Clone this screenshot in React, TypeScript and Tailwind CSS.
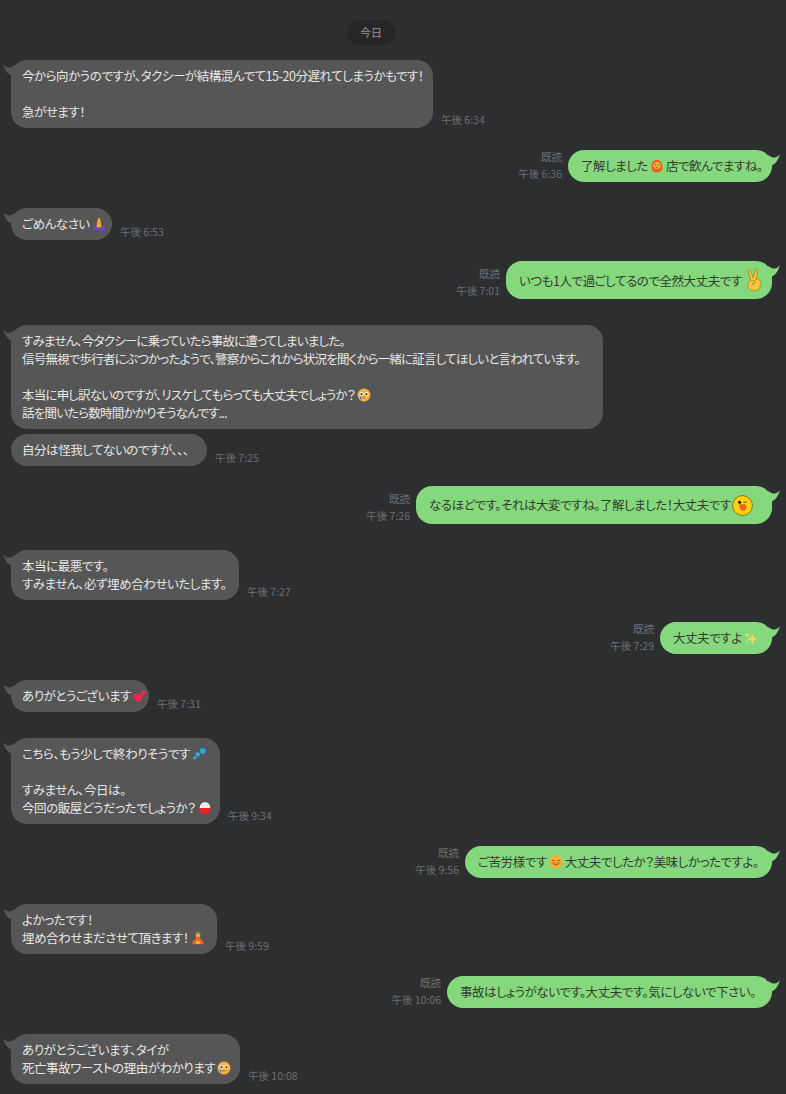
import React from 'react';

const Emoji = ({ children }: { children: React.ReactNode }) => (
  <svg viewBox="0 0 16 16" className="inline-block w-[14px] h-[14px] align-[-2px] mx-[2px]">
    {children}
  </svg>
);

const Lion = () => (
  <Emoji>
    <path d="M8 1 C12 1 14 4 14 7 C14 10 15 12 13 13 L11 15 L5 15 L3 13 C1 12 2 10 2 7 C2 4 4 1 8 1Z" fill="#f4581c" />
    <circle cx="8" cy="7.5" r="4.2" fill="#f7b23b" />
    <rect x="6" y="6" width="1" height="1.4" fill="#5a3a10" />
    <rect x="9" y="6" width="1" height="1.4" fill="#5a3a10" />
    <path d="M6.5 9.5 h3 l-1.5 1.5z" fill="#c2410c" />
  </Emoji>
);

const Pray = () => (
  <Emoji>
    <path d="M6.8 1.5 h2.4 L10.5 9 L11 12 H5 L5.5 9Z" fill="#f9b233" />
    <path d="M8 2 V11" stroke="#c07d12" strokeWidth="0.6" />
    <path d="M4.5 10.5 L1 13.5 V15 H7 V12.5Z" fill="#7c3aed" />
    <path d="M11.5 10.5 L15 13.5 V15 H9 V12.5Z" fill="#7c3aed" />
  </Emoji>
);

const Victory = () => (
  <svg viewBox="0 0 22 26" className="inline-block w-[20px] h-[24px] align-[-6px] ml-[3px]">
    <path
      d="M6 13 L3.4 3.2 C3 1.6 5.4 0.9 5.9 2.5 L9 10.6 L11.6 1.7 C12.1 0.2 14.4 0.8 14.1 2.4 L12.4 11.6 C14.6 11.4 16 12.2 16 13.6 C17.4 13.8 17.6 15.2 17 16 C17.8 16.6 17.6 18.2 16.6 18.8 C17 22.4 14.4 25 10.4 25 C6.2 25 3.4 22.6 3.2 19 C3 16.4 4 14.4 6 13Z"
      fill="#f8c73e"
      stroke="#a97f1c"
      strokeWidth="0.9"
    />
    <path d="M6 13.6 C8 13 10.4 13.4 11 15 C11.4 16.6 9 17 7.6 16.4 M9.4 17 C8.6 18.4 7.6 19 6.8 19.4 M12.4 11.6 L11.6 14" fill="none" stroke="#a97f1c" strokeWidth="0.9" />
  </svg>
);

const Crying = () => (
  <Emoji>
    <circle cx="8" cy="8" r="7.4" fill="#fbb040" />
    <circle cx="5.2" cy="6.8" r="2.3" fill="#fff" />
    <circle cx="10.8" cy="6.8" r="2.3" fill="#fff" />
    <circle cx="5.2" cy="7" r="1.2" fill="#4a3410" />
    <circle cx="10.8" cy="7" r="1.2" fill="#4a3410" />
    <path d="M6.5 11.6 q1.5 -1.2 3 0" stroke="#7a4a10" strokeWidth="0.8" fill="none" />
    <path d="M4.2 9 C3 11 3 13 4.2 13 C5.4 13 5.4 11 4.2 9Z" fill="#2f7de1" />
  </Emoji>
);

const Sally = () => (
  <svg viewBox="0 0 22 22" className="inline-block w-[21px] h-[21px] align-[-6px] ml-[1px]">
    <circle cx="11" cy="11" r="10.4" fill="#ffd20a" stroke="#6b5a10" strokeWidth="0.8" />
    <circle cx="8" cy="7.6" r="1.6" fill="#111" />
    <path d="M12 7.6 h3.4" stroke="#5a4a10" strokeWidth="1" />
    <path d="M7.6 10 C10 9.4 13.6 9.6 14.6 10.4 C15.4 12 15 15.6 13 16.4 C11 17 8.6 16.2 8.2 14 Z" fill="#e8622a" />
  </svg>
);

const Sparkles = () => (
  <Emoji>
    <path d="M9.5 3 L11 7.5 L15.5 9 L11 10.5 L9.5 15 L8 10.5 L3.5 9 L8 7.5Z" fill="#fcd46a" />
    <path d="M3.5 1.5 L4.3 3.7 L6.5 4.5 L4.3 5.3 L3.5 7.5 L2.7 5.3 L0.5 4.5 L2.7 3.7Z" fill="#fcd46a" />
    <path d="M4 10.5 L4.6 12 L6 12.5 L4.6 13 L4 14.5 L3.4 13 L2 12.5 L3.4 12Z" fill="#fcd46a" />
  </Emoji>
);

const Hearts = () => (
  <Emoji>
    <path d="M1 8 C1 5 4.6 4 6.5 6.6 C8.6 5.2 11.6 6.4 11 9.4 C10.4 12 7.6 14 5.6 15 C3.4 13.6 1 11 1 8Z" fill="#f5274f" />
    <path d="M9 3.4 C9 1.6 11.4 1 12.4 2.6 C13.6 1.4 15.6 2.4 15.2 4.2 C14.8 5.8 13 7 11.8 7.6 C10.4 6.6 9 5.2 9 3.4Z" fill="#f5274f" />
  </Emoji>
);

const Sweat = () => (
  <Emoji>
    <path d="M10 1.5 C14.5 1 16 1.5 15.5 5 C15 8.4 10.4 8.8 9.4 6 C9 4.6 9.2 3 10 1.5Z" fill="#2aa8e0" />
    <path d="M5 6 C8.4 6 9.4 6.4 9 9 C8.6 11.6 5 11.6 4.2 9.8 C3.8 8.4 4.2 7 5 6Z" fill="#2aa8e0" />
    <path d="M2.4 10.6 C4.6 10.4 5.4 11 5 12.8 C4.6 14.8 1.8 14.8 1.2 13.4 C0.9 12.4 1.4 11.4 2.4 10.6Z" fill="#2aa8e0" />
  </Emoji>
);

const Rice = () => (
  <Emoji>
    <path d="M2 8 C2 3.5 5 1.5 8 1.5 C11 1.5 14 3.5 14 8Z" fill="#eeeeee" />
    <path d="M5 4 h1 M8 3 h1 M10 5 h1 M4 6 h1 M7 6 h1" stroke="#b9b9b9" strokeWidth="0.7" />
    <path d="M1.5 8 H14.5 C14.5 12.5 12 15 8 15 C4 15 1.5 12.5 1.5 8Z" fill="#ec2227" />
  </Emoji>
);

const Smile = () => (
  <Emoji>
    <circle cx="8" cy="8" r="7.4" fill="#ffac33" />
    <path d="M3.2 6.8 q1.8 -1.8 3.4 0 M9.4 6.8 q1.8 -1.8 3.4 0" stroke="#6b3d0a" strokeWidth="0.9" fill="none" />
    <path d="M2.8 9 H13.2" stroke="#f4511e" strokeWidth="0.8" />
    <path d="M4.6 9.8 q3.4 3.4 6.8 0" stroke="#6b3d0a" strokeWidth="0.9" fill="none" />
  </Emoji>
);

const Bow = () => (
  <Emoji>
    <path d="M5 2 q3 -1.6 6 0" stroke="#8fa3b8" strokeWidth="0.8" fill="none" />
    <circle cx="8" cy="5.4" r="2.8" fill="#f9a826" />
    <path d="M8 6 L13 11 L15 15 H1 L3 11Z" fill="#f4661b" />
    <path d="M5.6 11.6 h4.8 v3 h-4.8z" fill="#fbb040" />
  </Emoji>
);

const TailLeft = () => (
  <svg viewBox="0 0 14 12" className="absolute left-[-8px] top-[4px] w-[14px] h-[12px]">
    <path d="M0 0 C1.5 2 3.5 3.6 5.5 3.6 C8 3.6 10 2.5 12 1 L14 12 H9 C4 10 1.5 5 0 0Z" fill="#565656" />
  </svg>
);

const TailRight = () => (
  <svg viewBox="0 0 14 12" className="absolute right-[-8px] top-[4px] w-[14px] h-[12px]">
    <path d="M14 0 C12.5 2 10.5 3.6 8.5 3.6 C6 3.6 4 2.5 2 1 L0 12 H5 C10 10 12.5 5 14 0Z" fill="#85d97c" />
  </svg>
);

const Left = ({ time, className, width, tail = true, children }: { time?: string; className?: string; width: string; tail?: boolean; children: React.ReactNode }) => (
  <div className={`flex items-end ${className ?? ''}`}>
    <div className={`relative rounded-[16px] bg-[#565656] px-[11px] py-[7px] text-[12.5px] leading-[18px] text-[#e6e6e6] whitespace-pre ${width}`}>
      {tail && <TailLeft />}
      {children}
    </div>
    {time && <span className="ml-2 text-[10.5px] leading-[16px] text-[#6c6e72]">{time}</span>}
  </div>
);

const Right = ({ time, className, width, children }: { time: string; className?: string; width: string; children: React.ReactNode }) => (
  <div className={`flex items-end justify-end ${className ?? ''}`}>
    <div className="mr-[6px] flex flex-col items-end text-[10.5px] leading-[17px] text-[#6c6e72]">
      <span>既読</span>
      <span>{time}</span>
    </div>
    <div className={`relative flex items-center rounded-[16px] bg-[#85d97c] px-[13px] py-[7px] text-[12.5px] leading-[18px] text-[#333b33] whitespace-nowrap ${width}`}>
      <TailRight />
      <span>{children}</span>
    </div>
  </div>
);

export default function App() {
  return (
    <div className="h-[1094px] overflow-hidden bg-[#2d2e30] pl-[11px] pr-[14px] pt-[20px] font-['Noto_Sans_CJK_JP','Liberation_Sans',sans-serif] [font-feature-settings:'palt']">
      <div className="flex justify-center pr-[41px]">
        <div className="flex h-[25px] w-[48px] items-center justify-center rounded-full bg-[#252628] text-[11px] text-[#969696]">今日</div>
      </div>

      <Left time="午後 6:34" width="w-[422px] tracking-[-0.45px]" className="mt-[15px]">
        {'今から向かうのですが、タクシーが結構混んでて15-20分遅れてしまうかもです！\n\n急がせます！'}
      </Left>
      <Right time="午後 6:36" width="w-[204px] tracking-[-0.45px]" className="mt-[20px]">
        了解しました<Lion />店で飲んでますね。
      </Right>
      <Left time="午後 6:53" width="w-[101px] tracking-[-0.45px]" className="mt-[26px]">
        ごめんなさい<Pray />
      </Left>
      <Right time="午後 7:01" width="w-[266px] h-[38px] tracking-[-0.45px]" className="mt-[21px]">
        いつも1人で過ごしてるので全然大丈夫です<Victory />
      </Right>
      <Left width="w-[592px] tracking-[-0.8px]" className="mt-[26px]">
        {'すみません、今タクシーに乗っていたら事故に遭ってしまいました。\n信号無視で歩行者にぶつかったようで、警察からこれから状況を聞くから一緒に証言してほしいと言われています。\n\n本当に申し訳ないのですが、リスケしてもらっても大丈夫でしょうか？'}<Crying />
        {'\n話を聞いたら数時間かかりそうなんです...'}
      </Left>
      <Left time="午後 7:25" width="w-[196px] tracking-[-0.45px]" tail={false} className="mt-[5px]">
        自分は怪我してないのですが、、、
      </Left>
      <Right time="午後 7:26" width="w-[356px] h-[38px] tracking-[-0.45px]" className="mt-[20px]">
        なるほどです。それは大変ですね。了解しました！大丈夫です<Sally />
      </Right>
      <Left time="午後 7:27" width="w-[228px] tracking-[-0.45px]" className="mt-[26px]">
        {'本当に最悪です。\nすみません、必ず埋め合わせいたします。'}
      </Left>
      <Right time="午後 7:29" width="w-[112px] tracking-[-0.45px]" className="mt-[20px]">
        大丈夫ですよ<Sparkles />
      </Right>
      <Left time="午後 7:31" width="w-[138px] tracking-[-0.45px]" className="mt-[26px]">
        ありがとうございます<Hearts />
      </Left>
      <Left time="午後 9:34" width="w-[209px] tracking-[-0.45px]" className="mt-[26px]">
        こちら、もう少しで終わりそうです<Sweat />
        {'\n\nすみません、今日は。\n今回の飯屋どうだったでしょうか？'}<Rice />
      </Left>
      <Right time="午後 9:56" width="w-[307px] tracking-[-0.45px]" className="mt-[20px]">
        ご苦労様です<Smile />大丈夫でしたか？美味しかったですよ。
      </Right>
      <Left time="午後 9:59" width="w-[206px] tracking-[-0.45px]" className="mt-[26px]">
        {'よかったです！\n埋め合わせまださせて頂きます！'}<Bow />
      </Left>
      <Right time="午後 10:06" width="w-[325px] tracking-[-0.45px]" className="mt-[20px]">
        事故はしょうがないです。大丈夫です。気にしないで下さい。
      </Right>
      <Left time="午後 10:08" width="w-[229px] tracking-[-0.45px]" className="mt-[26px]">
        {'ありがとうございます、タイが\n死亡事故ワーストの理由がわかります'}<Crying />
      </Left>
    </div>
  );
}
